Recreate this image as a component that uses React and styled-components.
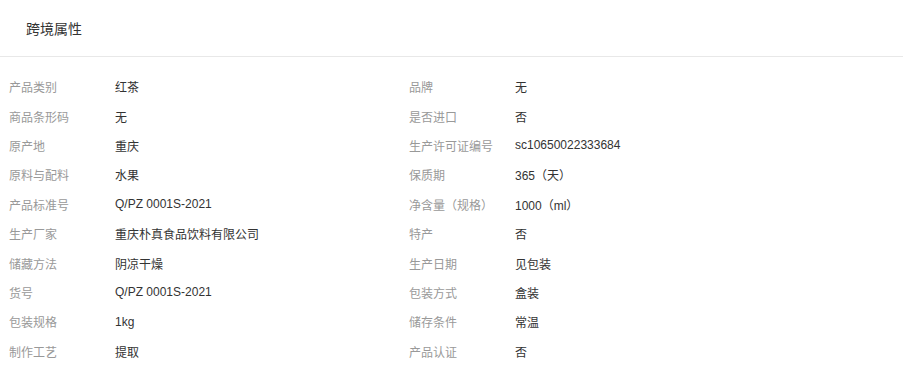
import React from 'react';
import styled, {createGlobalStyle} from 'styled-components';

const GlobalStyle = createGlobalStyle`
  body {
    margin: 0;
    background: #fff;
    font-family: "Liberation Sans", "Noto Sans CJK SC", sans-serif;
  }
`;

const Panel = styled.div`
  width: 903px;
  background: #fff;
`;

const Header = styled.div`
  height: 56px;
  padding-left: 26px;
  display: flex;
  align-items: center;
  font-size: 14px;
  color: #333;
  border-bottom: 1px solid #e8e8e8;
`;

const Body = styled.div`
  padding: 15px 0 0 9px;
  display: grid;
  grid-template-columns: 400px 400px;
  grid-auto-rows: 29.4px;
`;

const Cell = styled.div`
  display: flex;
  align-items: center;
  font-size: 12px;
`;

const Label = styled.span`
  width: 106px;
  flex-shrink: 0;
  color: #999;
`;

const Value = styled.span`
  color: #333;
`;

const attrs = [
  ['产品类别', '红茶', '品牌', '无'],
  ['商品条形码', '无', '是否进口', '否'],
  ['原产地', '重庆', '生产许可证编号', 'sc10650022333684'],
  ['原料与配料', '水果', '保质期', '365（天）'],
  ['产品标准号', 'Q/PZ 0001S-2021', '净含量（规格）', '1000（ml）'],
  ['生产厂家', '重庆朴真食品饮料有限公司', '特产', '否'],
  ['储藏方法', '阴凉干燥', '生产日期', '见包装'],
  ['货号', 'Q/PZ 0001S-2021', '包装方式', '盒装'],
  ['包装规格', '1kg', '储存条件', '常温'],
  ['制作工艺', '提取', '产品认证', '否'],
];

const App = () => {
  return (
    <>
      <GlobalStyle />
      <Panel>
        <Header>跨境属性</Header>
        <Body>
          {attrs.map(([l1, v1, l2, v2]) => (
            <React.Fragment key={l1}>
              <Cell>
                <Label>{l1}</Label>
                <Value>{v1}</Value>
              </Cell>
              <Cell>
                <Label>{l2}</Label>
                <Value>{v2}</Value>
              </Cell>
            </React.Fragment>
          ))}
        </Body>
      </Panel>
    </>
  );
};

export default App;
